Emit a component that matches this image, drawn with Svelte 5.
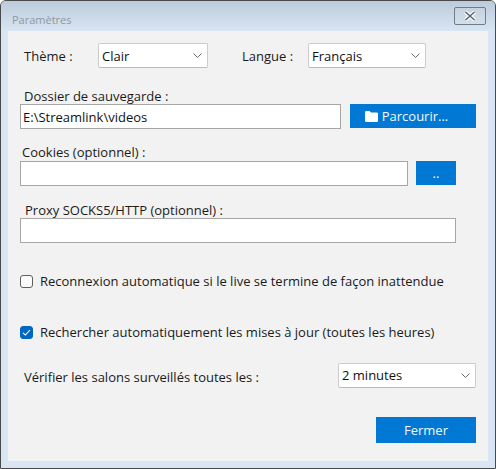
<script>
  let theme = $state('Clair')
  let langue = $state('Français')
  let dossier = $state('E:\\Streamlink\\videos')
  let cookies = $state('')
  let proxy = $state('')
  let reconnect = $state(false)
  let maj = $state(true)
  let delai = $state('2 minutes')
</script>

{#snippet chevron()}
  <svg class="chev" viewBox="0 0 9 5" width="9" height="5">
    <path d="M0.5 0.5 L4.5 4.5 L8.5 0.5" fill="none" stroke="#666" stroke-width="1" />
  </svg>
{/snippet}

<div class="window">
  <div class="titlebar">
    <span class="title">Paramètres</span>
    <button class="close" aria-label="Fermer la fenêtre">
      <svg viewBox="0 0 12 10" width="12" height="10">
        <path d="M1.5 1 L10.5 9 M10.5 1 L1.5 9" stroke="#fff" stroke-width="3.8" />
        <path d="M1.5 1 L10.5 9 M10.5 1 L1.5 9" stroke="#5c6670" stroke-width="1.6" />
      </svg>
    </button>
  </div>

  <div class="client">
    <div class="row-top">
      <span class="lbl-theme">Thème :</span>
      <div class="select sel-theme">{theme}{@render chevron()}</div>
      <span class="lbl-langue">Langue :</span>
      <div class="select sel-langue">{langue}{@render chevron()}</div>
    </div>

    <div class="label l-dossier">Dossier de sauvegarde :</div>
    <div class="row">
      <input class="in-dossier" bind:value={dossier} />
      <button class="primary browse">
        <svg viewBox="0 0 13 11" width="13" height="11">
          <path d="M0 1.2 Q0 0 1.2 0 H4.6 L6 1.6 H11.8 Q13 1.6 13 2.8 V9.8 Q13 11 11.8 11 H1.2 Q0 11 0 9.8 Z" fill="#fff" />
        </svg>
        Parcourir...
      </button>
    </div>

    <div class="label l-cookies">Cookies (optionnel) :</div>
    <div class="row">
      <input class="in-cookies" bind:value={cookies} />
      <button class="primary dots">..</button>
    </div>

    <div class="label l-proxy">Proxy SOCKS5/HTTP (optionnel) :</div>
    <input class="in-proxy" bind:value={proxy} />

    <label class="check c1">
      <input type="checkbox" bind:checked={reconnect} />
      <span class="box"></span>
      Reconnexion automatique si le live se termine de façon inattendue
    </label>

    <label class="check c2">
      <input type="checkbox" bind:checked={maj} />
      <span class="box">
        {#if maj}
          <svg viewBox="0 0 9 7" width="9" height="7">
            <path d="M1 3.8 L3.4 6 L8 1" fill="none" stroke="#fff" stroke-width="1.1" />
          </svg>
        {/if}
      </span>
      Rechercher automatiquement les mises à jour (toutes les heures)
    </label>

    <div class="row-delai">
      <span class="delai-txt">Vérifier les salons surveillés toutes les :</span>
      <div class="select sel-delai">{delai}{@render chevron()}</div>
    </div>

    <div class="footer">
      <button class="primary fermer">Fermer</button>
    </div>
  </div>
</div>

<style>
  :global(body) {
    margin: 0;
    background: #fff;
  }

  .window {
    width: 496px;
    height: 469px;
    box-sizing: border-box;
    display: flex;
    flex-direction: column;
    border: 1px solid #4a4a4a;
    border-radius: 6px 6px 0 0;
    background: #d9e5f2;
    padding: 0 7px 7px;
    font-family: "Open Sans", "Noto Sans", sans-serif;
    font-size: 13px;
    color: #1a1a1a;
  }

  .titlebar {
    height: 30px;
    flex: none;
    display: flex;
    align-items: center;
    justify-content: space-between;
    margin: 0 -7px;
    padding: 0 9px 0 11px;
    background: linear-gradient(#bccbdb, #d8e5f3);
    border-radius: 5px 5px 0 0;
  }

  .title {
    font-size: 11px;
    color: #8f979f;
    margin-top: 6px;
  }

  .close {
    width: 32px;
    height: 18px;
    padding: 0;
    margin-top: -1px;
    display: flex;
    align-items: center;
    justify-content: center;
    background: linear-gradient(#c6d2df, #d3deea);
    border: 1px solid #6f7c8a;
    border-radius: 2px;
  }

  .client {
    flex: 1;
    background: #f2f2f2;
    padding: 12px 12px 0;
    display: flex;
    flex-direction: column;
    align-items: flex-start;
  }

  .row-top {
    display: flex;
    align-items: center;
    height: 25px;
  }

  .lbl-theme {
    width: 78px;
    padding-left: 4px;
    box-sizing: border-box;
  }

  .lbl-langue {
    width: 66px;
    margin-left: 34px;
  }

  .select {
    height: 25px;
    box-sizing: border-box;
    background: #fff;
    border: 1px solid #ccc;
    border-bottom-color: #bbb;
    border-radius: 2px;
    display: flex;
    align-items: center;
    justify-content: space-between;
    padding: 0 5px 0 3px;
    color: #111;
  }

  .sel-theme { width: 110px; }
  .sel-langue { width: 118px; }
  .sel-delai { width: 138px; }

  .chev {
    flex: none;
  }

  .label {
    padding-left: 4px;
    line-height: 18px;
  }

  .l-dossier { margin-top: 19px; margin-bottom: -1px; }
  .l-cookies { margin-top: 14px; padding-left: 2px; }
  .l-proxy { margin-top: 15px; margin-bottom: -1px; padding-left: 5px; }

  .row {
    display: flex;
    align-items: flex-start;
  }

  input:not([type]) {
    height: 25px;
    box-sizing: border-box;
    border: 1px solid #a6a6a6;
    background: #fff;
    padding: 0 2px;
    margin: 0;
    font: inherit;
    color: #111;
    outline: none;
  }

  .in-dossier { width: 321px; }
  .in-cookies { width: 388px; }
  .in-proxy { width: 436px; }

  .primary {
    background: #0078d4;
    color: #f4f8fc;
    border: none;
    height: 24px;
    padding: 0;
    font: inherit;
    display: flex;
    align-items: center;
    justify-content: center;
    gap: 4px;
  }

  .browse { width: 126px; margin-left: 9px; padding-right: 13px; box-sizing: border-box; }
  .dots { width: 40px; margin-left: 8px; }

  .check {
    display: flex;
    align-items: center;
    gap: 7px;
    height: 18px;
  }

  .check input {
    position: absolute;
    opacity: 0;
    width: 0;
    height: 0;
  }

  .box {
    width: 13px;
    height: 13px;
    box-sizing: border-box;
    border: 1px solid #5f5f5f;
    border-radius: 3px;
    background: #fbfbfb;
    display: flex;
    align-items: center;
    justify-content: center;
    flex: none;
  }

  .check input:checked + .box {
    background: #0067c0;
    border-color: #0067c0;
  }

  .c1 { margin-top: 29px; }
  .c2 { margin-top: 33px; }

  .row-delai {
    display: flex;
    align-items: center;
    justify-content: space-between;
    align-self: stretch;
    margin-top: 22px;
    padding-left: 4px;
    height: 24px;
  }

  .delai-txt {
    margin-top: 3px;
  }

  .footer {
    align-self: stretch;
    display: flex;
    justify-content: flex-end;
    margin-top: 30px;
  }

  .fermer {
    width: 100px;
    height: 26px;
  }
</style>
